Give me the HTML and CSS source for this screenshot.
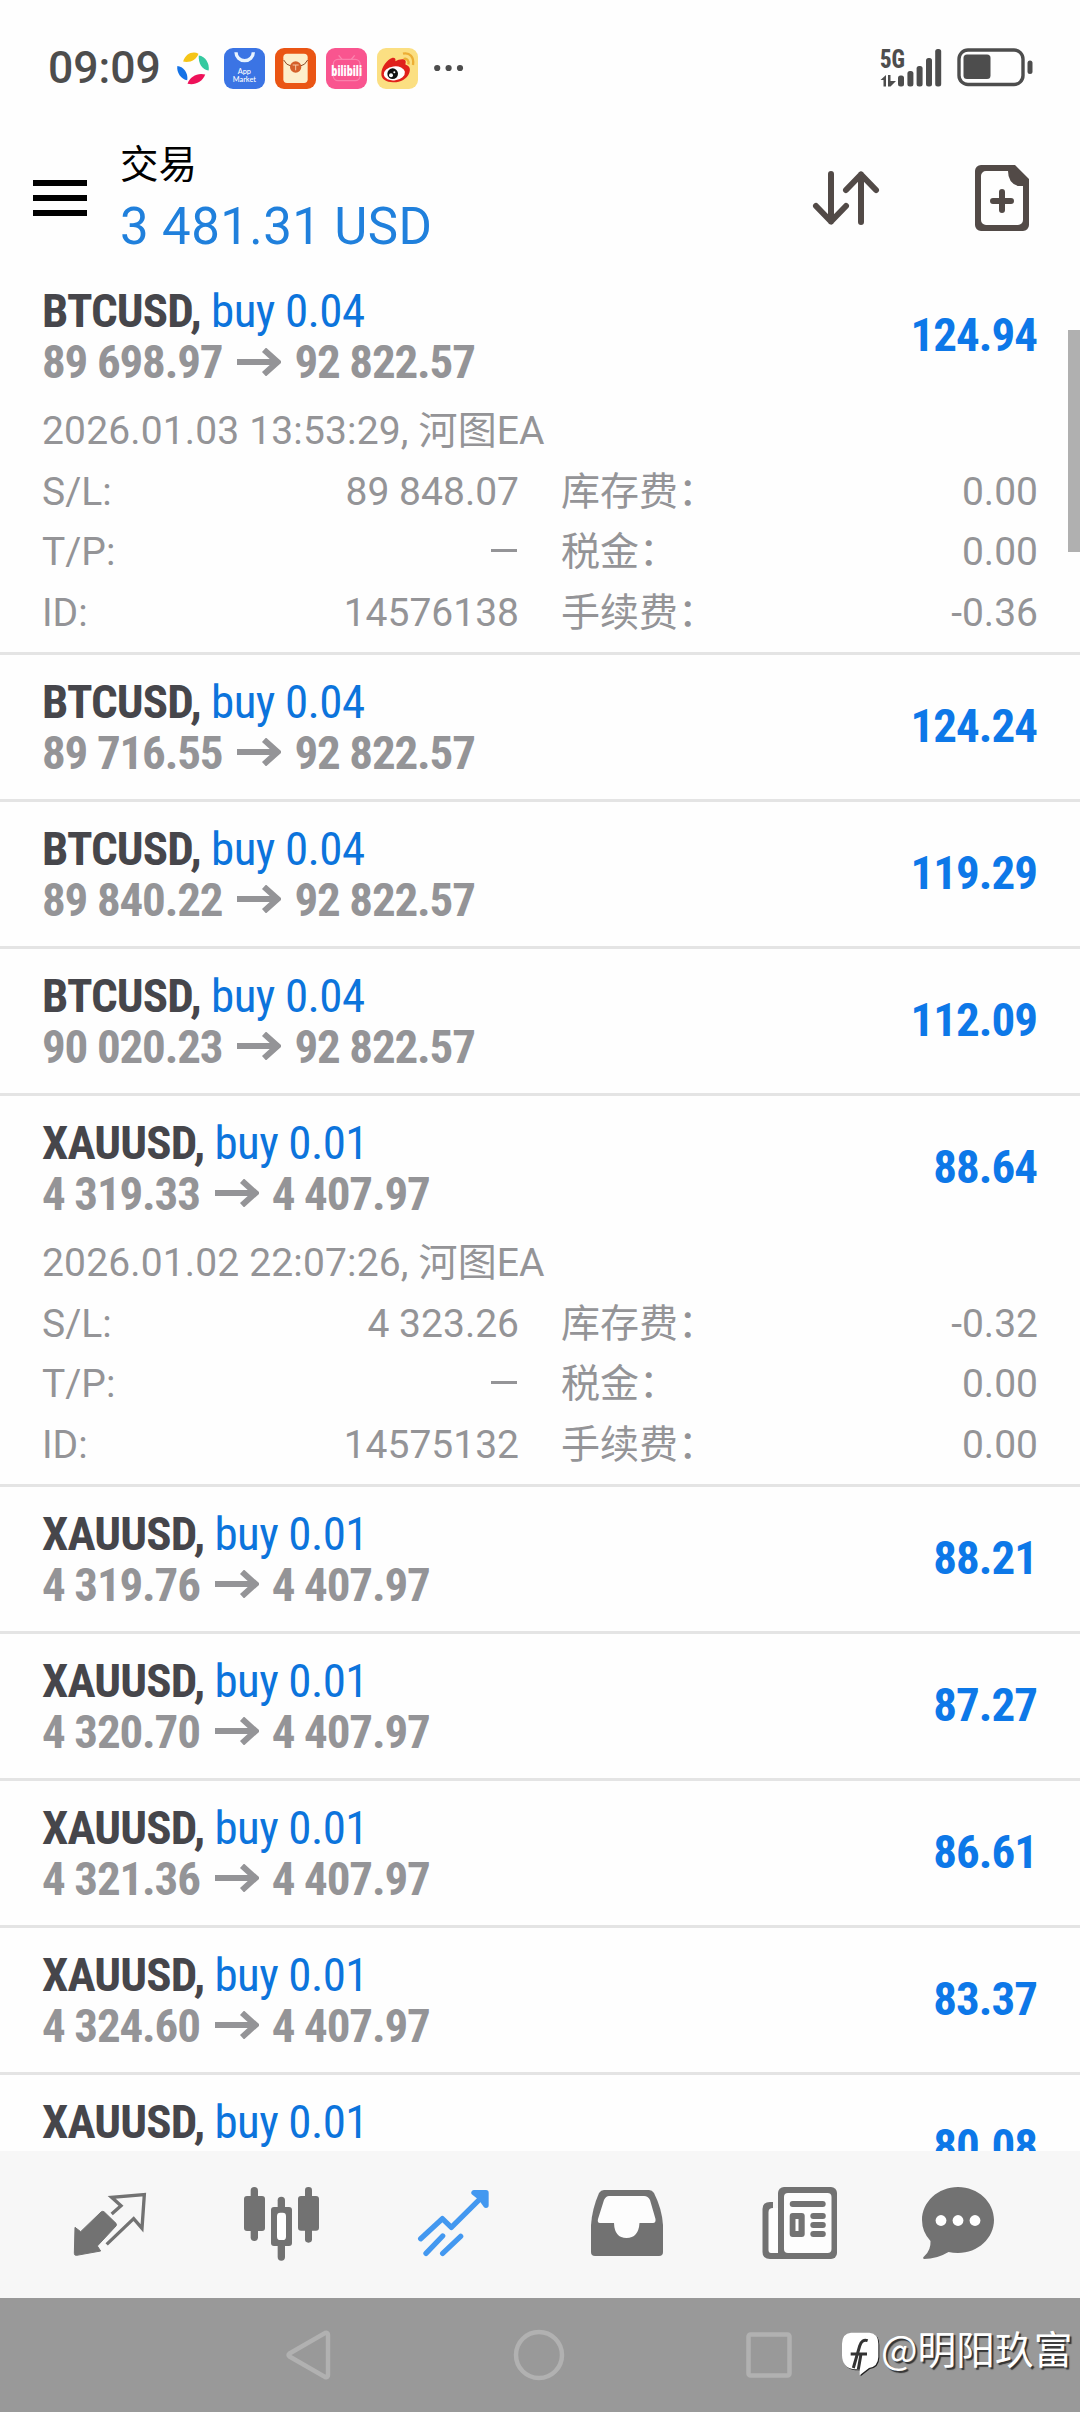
FILE: index.html
```
<!DOCTYPE html>
<html lang="zh-CN">
<head>
<meta charset="utf-8">
<title>交易</title>
<link rel="stylesheet" href="styles.css">
</head>
<body>
<svg width="0" height="0" class="defs">
  <symbol id="arrow" viewBox="0 0 44 28"><path d="M0 14H39M27 1.8L40.5 14L27 26.2" fill="none" stroke="currentColor" stroke-width="6"/></symbol>
</svg>
<div class="screen">
  <div class="status">
    <span class="clock">09:09</span>
    <svg class="pinwheel" width="32" height="32" viewBox="0 0 94 94">
      <path d="M18 28C24 6 46 -4 63 5C58 22 38 33 18 28Z" fill="#f5c518"/>
      <path d="M64 10C84 12 96 34 93 54C74 53 62 32 64 10Z" fill="#36c9a0"/>
      <path d="M83 66C74 90 50 98 31 93C38 72 60 60 83 66Z" fill="#ee1159"/>
      <path d="M1 41C18 42 34 62 30 83C12 80 -2 60 1 41Z" fill="#1472e6"/>
    </svg>
    <div class="apps">
      <svg width="41" height="41" viewBox="0 0 123 123">
        <rect width="123" height="123" rx="27" fill="#3b74e4"/>
        <path d="M36 13a26 25 0 0 0 52 0" fill="none" stroke="#e8f3ff" stroke-width="10"/>
        <text x="61" y="77" class="app-label">App</text>
        <text x="61" y="102" class="app-label">Market</text>
      </svg>
      <svg width="41" height="41" viewBox="0 0 123 123">
        <rect width="123" height="123" rx="27" fill="#ea5514"/>
        <rect x="25" y="17" width="73" height="88" rx="11" fill="#fdeecb"/>
        <path d="M26 36Q34 52 48 54H76Q90 52 98 36" fill="none" stroke="#8a4a28" stroke-width="3"/>
        <circle cx="62" cy="57" r="17" fill="#d4602a"/>
        <path d="M53 51H71M62 51V67" stroke="#f7c9a5" stroke-width="3"/>
      </svg>
      <svg width="41" height="41" viewBox="0 0 123 123">
        <rect width="123" height="123" rx="27" fill="#f9558f"/>
        <path d="M38 22l10 12M86 22L76 34" stroke="#fb86af" stroke-width="4"/>
        <rect x="22" y="34" width="80" height="64" rx="14" fill="none" stroke="#fb7fab" stroke-width="4"/>
        <text x="62" y="83" class="bili-label" textLength="92" lengthAdjust="spacingAndGlyphs">bilibili</text>
      </svg>
      <svg width="41" height="41" viewBox="0 0 123 123">
        <rect width="123" height="123" rx="27" fill="#fbdf82"/>
        <path d="M13 78C13 56 32 34 45 30C54 28 57 34 55 40C65 34 84 30 86 40C87 44 84 48 86 50C98 54 101 62 97 74C90 94 68 104 48 103C28 102 13 94 13 78Z" fill="#e0201b"/>
        <ellipse cx="52" cy="76" rx="32" ry="21" transform="rotate(-8 52 76)" fill="#fff"/>
        <circle cx="47" cy="77" r="16" fill="#111"/>
        <circle cx="42" cy="82" r="6" fill="#fff"/><circle cx="52" cy="73" r="3" fill="#fff"/>
        <path d="M78 17C98 12 112 28 108 51M80 33C90 30 97 38 94 49" fill="none" stroke="#ecae35" stroke-width="7"/>
      </svg>
    </div>
    <svg class="more" width="29" height="8" viewBox="0 0 29 8" fill="#4d4d4d"><circle cx="3.2" cy="4" r="3.1"/><circle cx="14.6" cy="4" r="3.1"/><circle cx="26" cy="4" r="3.1"/></svg>
    <svg class="signal" width="63" height="40" viewBox="0 0 63 40" fill="#4d4d4d">
      <text x="0" y="19.500" class="net" textLength="25" lengthAdjust="spacingAndGlyphs">5G</text>
      <path d="M.5 32L6 27V38.500H3.500V32ZM8 27H10.500V33H16L10.500 38.500H8Z"/>
      <rect x="18" y="27.500" width="6" height="11" rx="2.500"/><rect x="27.400" y="23" width="6" height="15.500" rx="2.500"/><rect x="36.600" y="18" width="6" height="20.500" rx="2.500"/><rect x="46" y="10" width="6" height="28.500" rx="2.500"/><rect x="55.200" y="1" width="6" height="37.500" rx="2.500"/>
    </svg>
    <svg class="battery" width="76" height="38" viewBox="0 0 76 38">
      <rect x="2" y="2" width="64" height="34.500" rx="9" fill="none" stroke="#4d4d4d" stroke-width="3.400"/>
      <rect x="6.500" y="6.500" width="27" height="24.500" rx="3.500" fill="#4d4d4d"/>
      <rect x="70.500" y="12.500" width="5" height="13.500" rx="2.500" fill="#4d4d4d"/>
    </svg>
  </div>

  <header class="header">
    <svg class="menu" width="54" height="36" viewBox="0 0 54 36"><path d="M0 3H54M0 18H54M0 33H54" stroke="#000" stroke-width="6"/></svg>
    <div class="heading">
      <div class="title">交易</div>
      <div class="balance">3 481.31 USD</div>
    </div>
    <svg class="sort" width="68" height="56" viewBox="0 0 68 56" fill="none" stroke="#524a47" stroke-width="6" stroke-linecap="round" stroke-linejoin="round">
      <path d="M19 4V51.500M4 36L19 51.500L34 36M49 52V4.500M34 20L49 4.500L64 20"/>
    </svg>
    <svg class="new-order" width="54" height="66" viewBox="0 0 54 66">
      <path fill-rule="evenodd" fill="#524a47" d="M6 0H40L54 14V60a6 6 0 0 1-6 6H6a6 6 0 0 1-6-6V6a6 6 0 0 1 6-6ZM11 6a5 5 0 0 0-5 5V55a5 5 0 0 0 5 5H43a5 5 0 0 0 5-5V21H43Q33 18 33 6Z"/>
      <path d="M18 36H36M27 27V45" stroke="#524a47" stroke-width="6" stroke-linecap="round"/>
    </svg>
  </header>

  <main class="list">
    <section class="position">
      <div class="summary">
        <div><div class="deal"><b>BTCUSD,</b> buy 0.04</div><div class="prices">89 698.97<svg class="arrow"><use href="#arrow"/></svg>92 822.57</div></div>
        <div class="profit">124.94</div>
      </div>
      <div class="details">
        <div class="opened">2026.01.03 13:53:29, 河图EA</div>
        <span>S/L:</span><span class="value">89 848.07</span><span class="fee">库存费：</span><span class="value">0.00</span>
        <span>T/P:</span><span class="value"><i class="dash"></i></span><span class="fee">税金：</span><span class="value">0.00</span>
        <span>ID:</span><span class="value">14576138</span><span class="fee">手续费：</span><span class="value">-0.36</span>
      </div>
    </section>
    <section class="position">
      <div class="summary">
        <div><div class="deal"><b>BTCUSD,</b> buy 0.04</div><div class="prices">89 716.55<svg class="arrow"><use href="#arrow"/></svg>92 822.57</div></div>
        <div class="profit">124.24</div>
      </div>
    </section>
    <section class="position">
      <div class="summary">
        <div><div class="deal"><b>BTCUSD,</b> buy 0.04</div><div class="prices">89 840.22<svg class="arrow"><use href="#arrow"/></svg>92 822.57</div></div>
        <div class="profit">119.29</div>
      </div>
    </section>
    <section class="position">
      <div class="summary">
        <div><div class="deal"><b>BTCUSD,</b> buy 0.04</div><div class="prices">90 020.23<svg class="arrow"><use href="#arrow"/></svg>92 822.57</div></div>
        <div class="profit">112.09</div>
      </div>
    </section>
    <section class="position">
      <div class="summary">
        <div><div class="deal"><b>XAUUSD,</b> buy 0.01</div><div class="prices">4 319.33<svg class="arrow"><use href="#arrow"/></svg>4 407.97</div></div>
        <div class="profit">88.64</div>
      </div>
      <div class="details">
        <div class="opened">2026.01.02 22:07:26, 河图EA</div>
        <span>S/L:</span><span class="value">4 323.26</span><span class="fee">库存费：</span><span class="value">-0.32</span>
        <span>T/P:</span><span class="value"><i class="dash"></i></span><span class="fee">税金：</span><span class="value">0.00</span>
        <span>ID:</span><span class="value">14575132</span><span class="fee">手续费：</span><span class="value">0.00</span>
      </div>
    </section>
    <section class="position">
      <div class="summary">
        <div><div class="deal"><b>XAUUSD,</b> buy 0.01</div><div class="prices">4 319.76<svg class="arrow"><use href="#arrow"/></svg>4 407.97</div></div>
        <div class="profit">88.21</div>
      </div>
    </section>
    <section class="position">
      <div class="summary">
        <div><div class="deal"><b>XAUUSD,</b> buy 0.01</div><div class="prices">4 320.70<svg class="arrow"><use href="#arrow"/></svg>4 407.97</div></div>
        <div class="profit">87.27</div>
      </div>
    </section>
    <section class="position">
      <div class="summary">
        <div><div class="deal"><b>XAUUSD,</b> buy 0.01</div><div class="prices">4 321.36<svg class="arrow"><use href="#arrow"/></svg>4 407.97</div></div>
        <div class="profit">86.61</div>
      </div>
    </section>
    <section class="position">
      <div class="summary">
        <div><div class="deal"><b>XAUUSD,</b> buy 0.01</div><div class="prices">4 324.60<svg class="arrow"><use href="#arrow"/></svg>4 407.97</div></div>
        <div class="profit">83.37</div>
      </div>
    </section>
    <section class="position">
      <div class="summary">
        <div><div class="deal"><b>XAUUSD,</b> buy 0.01</div></div>
        <div class="profit">80.08</div>
      </div>
    </section>
    <div class="scrollbar"></div>
  </main>

  <nav class="tabs">
    <svg viewBox="24 39 252 252">
      <path d="M45 172L62 185L123 126Q128 122 133 126L168 160Q171 164 168 168L112 228L122 243L50 256Q43 257 43 250Z" fill="#727272" stroke="#727272" stroke-width="3" stroke-linejoin="round"/>
      <path d="M155 132L183 107L155 82L253 74L246 175L221 146L140 223" fill="none" stroke="#727272" stroke-width="10"/>
    </svg>
    <svg viewBox="540 39 252 252" fill="#727272">
      <rect x="572" y="51" width="22" height="162" rx="11"/><rect x="552" y="78" width="63" height="105" rx="9"/>
      <rect x="653" y="80" width="22" height="192" rx="11"/><rect x="633" y="111" width="63" height="117" rx="9"/><rect x="651" y="128" width="27" height="82" rx="10" fill="#fff"/>
      <rect x="735" y="51" width="21" height="167" rx="10"/><rect x="714" y="78" width="63" height="104" rx="9"/>
    </svg>
    <svg viewBox="1056 39 252 252" fill="none" stroke="#4398f0" stroke-width="16" stroke-linecap="round" stroke-linejoin="round">
      <path d="M1082 206L1147 146L1174 172L1270 77M1098 250L1148 198M1148 250L1202 199"/><path d="M1242 68H1278V106L1262 84Z"/>
    </svg>
    <svg viewBox="0 0 84 84">
      <path d="M20 7H65Q68 7 70 10Q78 26 79 42V69a4 4 0 0 1-4 4H11a4 4 0 0 1-4-4V42Q8 26 15 10Q17 7 20 7Z" fill="#727272"/>
      <path d="M25 13H60Q64 13 66 17L71.500 36Q72 40 69 40H55.500Q54.500 55 42.500 55T30 40H16Q13 40 14 36L20 17Q22 13 25 13Z" fill="#fdfdfd"/>
    </svg>
    <svg viewBox="0 0 84 84">
      <path d="M17 19H14Q6.500 19 6.500 26V69Q6.500 76 14 76H30V25H17Z" fill="#727272"/>
      <path d="M17 25H22V70H15Q12.500 70 12.500 67V29Q12.500 25 17 25Z" fill="#fdfdfd"/>
      <rect x="22" y="4" width="59" height="72" rx="6" fill="#727272"/><rect x="28" y="10" width="47.500" height="60" rx="4" fill="#fdfdfd"/>
      <g fill="#727272"><rect x="33.700" y="18" width="36" height="6" rx="3"/><rect x="33.700" y="30" width="15" height="24" rx="3"/><rect x="54.300" y="30" width="15.500" height="6" rx="3"/><rect x="54.300" y="39" width="15.500" height="6" rx="3"/><rect x="54.300" y="48" width="15.500" height="6" rx="3"/></g>
      <rect x="39.500" y="36" width="3" height="12" fill="#fff"/>
    </svg>
    <svg class="chat" viewBox="0 0 84 84">
      <path d="M42 4C62 4 78 19 78 37S62 70 42 70Q37 70 32.500 69Q21 76 8 76Q6 75 8.500 73Q15 67 14.500 58Q6 49 6 37C6 19 22 4 42 4Z" fill="#727272"/>
      <g fill="#fff"><circle cx="25" cy="37.500" r="5.400"/><circle cx="42" cy="37.500" r="5.400"/><circle cx="59" cy="37.500" r="5.400"/></g>
    </svg>
  </nav>

  <footer class="system">
    <svg width="60" height="60" viewBox="0 0 60 60"><path d="M10.500 28.500L46 8Q49 7 49 10V50Q49 53 46 52L10.500 31.500Q8.500 30 10.500 28.500Z"/></svg>
    <svg width="60" height="60" viewBox="0 0 60 60"><circle cx="30" cy="30" r="23"/></svg>
    <svg width="60" height="60" viewBox="0 0 60 60"><rect x="9.500" y="9.500" width="41" height="41" rx="2"/></svg>
    <div class="author">
      <svg width="40" height="46" viewBox="0 0 120 138">
        <path d="M30 2H85Q112 4 112 35V75Q111 104 84 108L56 130V112H40Q4 108 3 70V35Q4 4 30 2Z" fill="#fff"/>
        <path d="M80 26Q63 20 56 42L37 108M29 66H78M60 66L52 112" fill="none" stroke="#333" stroke-width="9"/>
      </svg>
      <span>@明阳玖富</span>
    </div>
  </footer>
</div>
</body>
</html>
```
FILE: styles.css
```
* { box-sizing: border-box; }
body {
  margin: 0;
  background: #fefefe;
  font-family: Roboto, "Noto Sans CJK SC", sans-serif;
}
svg { display: block; flex: none; overflow: visible; }
.defs { position: absolute; }
.screen {
  width: 1080px;
  height: 2412px;
  display: flex;
  flex-direction: column;
  overflow: hidden;
}

.status {
  height: 132px;
  padding: 48px 47px 0 48px;
  display: flex;
  align-items: flex-start;
}
.clock {
  width: 113px;
  line-height: 41px;
  font-size: 44.500px;
  font-weight: 500;
  color: #4d4d4d;
  white-space: nowrap;
}
.pinwheel { margin: 4px 0 0 16px; }
.apps { display: flex; gap: 10px; margin-left: 15px; }
.more { margin: 16px 0 0 16px; }
.signal { margin-left: auto; }
.battery { margin: 0 0 0 14px; }
.app-label { font: 500 22px Lato, sans-serif; fill: #fff; text-anchor: middle; }
.bili-label { font: 800 40px "Open Sans", sans-serif; fill: #fff; text-anchor: middle; }
.net { font: 800 26px "Roboto Condensed", Roboto, sans-serif; }

.header {
  height: 132px;
  padding: 0 51px 0 33px;
  display: flex;
  align-items: flex-start;
}
.menu { margin-top: 48px; }
.heading { margin: 8px auto 0 33px; }
.title { height: 57px; line-height: 50px; font-size: 38.500px; color: #000; }
.balance { line-height: 60px; font-size: 51px; letter-spacing: .4px; color: #2080dc; }
.sort { margin-top: 38px; }
.new-order { margin: 33px 0 0 95px; }

.list { position: relative; height: 1887px; overflow: hidden; }
.position { border-bottom: 3px solid #e4e4e4; }
.summary {
  height: 144px;
  padding: 21px 42px 0;
  display: flex;
  justify-content: space-between;
  font-family: "Roboto Condensed", Roboto, sans-serif;
  font-size: 47px;
  line-height: 51px;
  letter-spacing: -.6px;
  white-space: nowrap;
}
.deal { color: #0c74dc; }
.deal b { color: #46464b; letter-spacing: -.85px; }
.prices {
  display: flex;
  align-items: center;
  font-weight: 700;
  letter-spacing: -1.150px;
  color: #949497;
}
.arrow { width: 44px; height: 28px; margin: 0 13px 0 15px; }
.profit {
  margin: 24px 1px 0 0;
  font-weight: 700;
  letter-spacing: -1px;
  color: #0d78e8;
}
.details {
  margin-top: -7px;
  padding: 0 42px 8px;
  display: grid;
  grid-template-columns: 90px 387px 150px 1fr;
  font-size: 39px;
  line-height: 60.700px;
  color: #949497;
  white-space: nowrap;
}
.opened { grid-column: 1 / -1; letter-spacing: .15px; }
.value { text-align: right; }
.fee { padding-left: 42px; }
.dash {
  display: inline-block;
  width: 26px;
  height: 3px;
  margin-right: 2px;
  vertical-align: 13px;
  background: currentColor;
}
.scrollbar {
  position: absolute;
  top: 66px;
  right: 0;
  width: 12px;
  height: 222px;
  background: #b0b0b0;
}

.tabs {
  height: 147px;
  padding: 32px 0 0 68px;
  display: flex;
  gap: 88px;
  background: #f7f7f7;
}
.tabs svg { width: 84px; height: 84px; }
.tabs .chat { margin-left: -12px; }

.system {
  position: relative;
  height: 114px;
  padding: 27px 0 0 279px;
  display: flex;
  gap: 170px;
  background: #999;
}
.system > svg { fill: none; stroke: #b1b1b1; stroke-width: 4.500; }
.author {
  position: absolute;
  left: 841px;
  top: 30px;
  display: flex;
  color: #fff;
  font: 400 38.700px/38px "Noto Sans CJK SC", sans-serif;
  text-shadow: 2px 2px 1px #333;
  white-space: nowrap;
}
.author svg { margin-top: 4px; filter: drop-shadow(1px 1px 0 #222); }
```
